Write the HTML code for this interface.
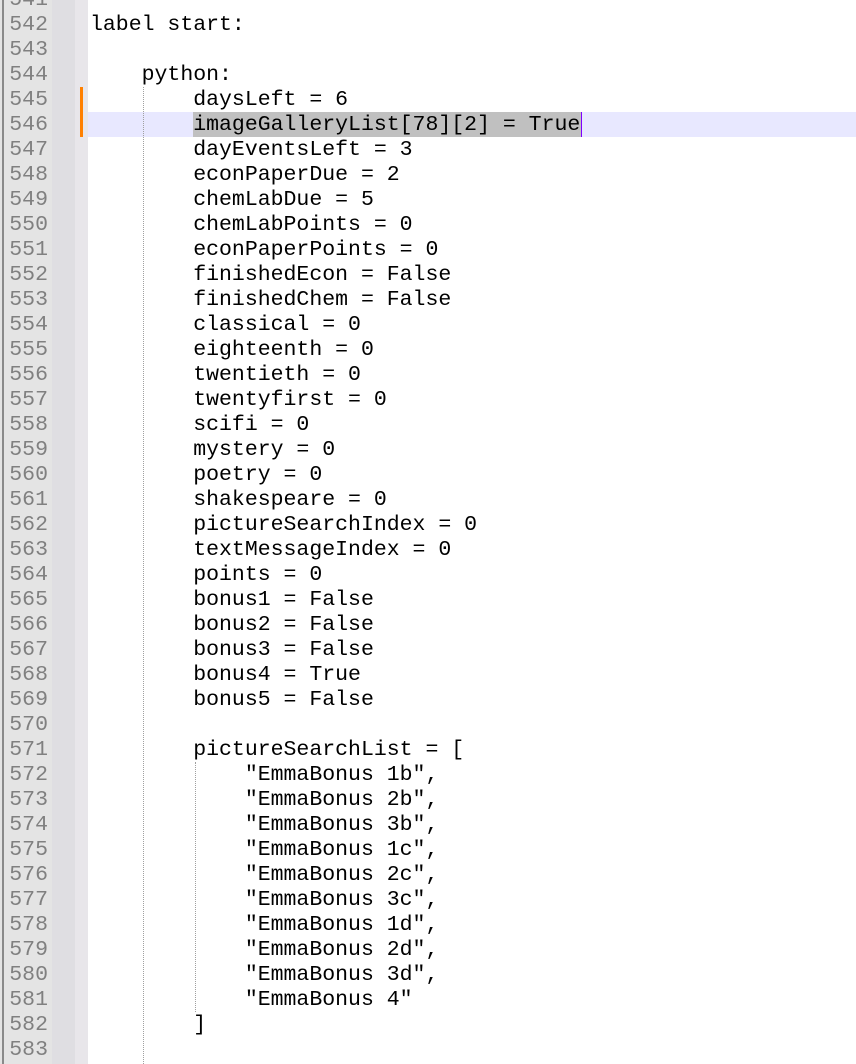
<!DOCTYPE html>
<html><head><style>
html,body{margin:0;width:856px;height:1064px;overflow:hidden;}
body{background:#fff;position:relative;}
.g1{position:absolute;left:0;top:0;width:52px;height:1064px;background:#e4e4e4;}
.bd{position:absolute;left:2px;top:0;width:2px;height:1064px;background:#8a8a8a;}
.g2{position:absolute;left:52px;top:0;width:23px;height:1064px;background:#dfdee2;}
.g3{position:absolute;left:75px;top:0;width:13px;height:1064px;background:#e8e6ea;}
.hl{position:absolute;left:88px;top:112px;width:768px;height:25px;background:#e8e8ff;}
.sel{position:absolute;left:193px;top:112px;width:388px;height:25px;background:#c0c0c0;}
.car{position:absolute;left:581px;top:112px;width:1px;height:25px;background:#8000ff;}
.ob{position:absolute;left:80px;top:87px;width:3px;height:50px;background:#ff8000;}
.gd{position:absolute;width:0;border-left:1px dotted #a0a0a0;}
pre{font-family:"Liberation Mono",monospace;margin:0;white-space:pre;}
.ln{position:absolute;left:0;top:-12px;width:48px;text-align:right;color:#808080;font-size:21.5px;line-height:25px;}
.code{position:absolute;left:90px;top:13px;font-size:21.5px;line-height:25px;color:#000;}
</style></head><body>
<div class="g1"></div><div class="bd"></div><div class="g2"></div><div class="g3"></div>
<div class="hl"></div><div class="sel"></div><div class="car"></div><div class="ob"></div>
<div class="gd" style="left:143px;top:87px;height:977px"></div>
<div class="gd" style="left:195px;top:762px;height:250px"></div>
<pre class="ln">541
542
543
544
545
546
547
548
549
550
551
552
553
554
555
556
557
558
559
560
561
562
563
564
565
566
567
568
569
570
571
572
573
574
575
576
577
578
579
580
581
582
583</pre>
<pre class="code">label start:

    python:
        daysLeft = 6
        imageGalleryList[78][2] = True
        dayEventsLeft = 3
        econPaperDue = 2
        chemLabDue = 5
        chemLabPoints = 0
        econPaperPoints = 0
        finishedEcon = False
        finishedChem = False
        classical = 0
        eighteenth = 0
        twentieth = 0
        twentyfirst = 0
        scifi = 0
        mystery = 0
        poetry = 0
        shakespeare = 0
        pictureSearchIndex = 0
        textMessageIndex = 0
        points = 0
        bonus1 = False
        bonus2 = False
        bonus3 = False
        bonus4 = True
        bonus5 = False

        pictureSearchList = [
            "EmmaBonus 1b",
            "EmmaBonus 2b",
            "EmmaBonus 3b",
            "EmmaBonus 1c",
            "EmmaBonus 2c",
            "EmmaBonus 3c",
            "EmmaBonus 1d",
            "EmmaBonus 2d",
            "EmmaBonus 3d",
            "EmmaBonus 4"
        ]
</pre>
</body></html>
